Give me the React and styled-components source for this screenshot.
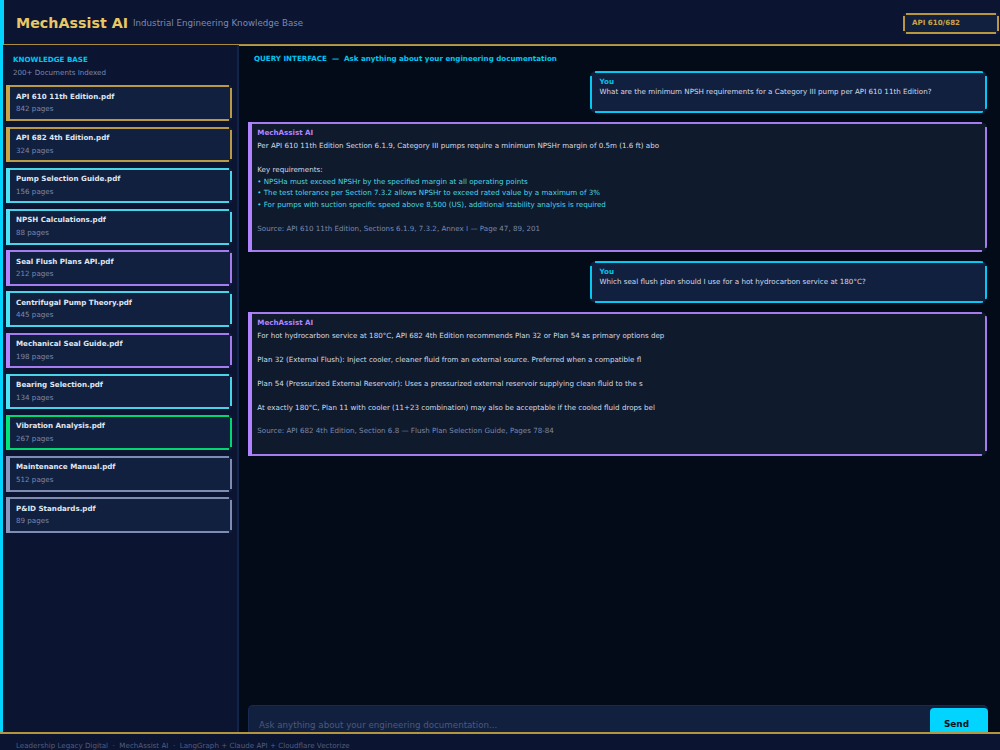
import React from "react";
import styled, { createGlobalStyle } from "styled-components";

const GlobalStyle = createGlobalStyle`
  * {
    box-sizing: border-box;
  }

  body {
    margin: 0;
    background: #040b18;
    font-family: "DejaVu Sans", sans-serif;
    overflow: hidden;
  }
`;

const colors = {
  cyan: "#00d4ff",
  aqua: "#4de3f7",
  gold: "#c9a445",
  purple: "#b184ff",
  green: "#00e676",
  slate: "#8896bd",
};

const documents = [
  { name: "API 610 11th Edition.pdf", pages: 842, color: colors.gold },
  { name: "API 682 4th Edition.pdf", pages: 324, color: colors.gold },
  { name: "Pump Selection Guide.pdf", pages: 156, color: colors.aqua },
  { name: "NPSH Calculations.pdf", pages: 88, color: colors.aqua },
  { name: "Seal Flush Plans API.pdf", pages: 212, color: colors.purple },
  { name: "Centrifugal Pump Theory.pdf", pages: 445, color: colors.aqua },
  { name: "Mechanical Seal Guide.pdf", pages: 198, color: colors.purple },
  { name: "Bearing Selection.pdf", pages: 134, color: colors.aqua },
  { name: "Vibration Analysis.pdf", pages: 267, color: colors.green },
  { name: "Maintenance Manual.pdf", pages: 512, color: colors.slate },
  { name: "P&ID Standards.pdf", pages: 89, color: colors.slate },
];

const messages = [
  {
    from: "user",
    text: "What are the minimum NPSH requirements for a Category III pump per API 610 11th Edition?",
  },
  {
    from: "ai",
    height: 130.4,
    lines: [
      { text: "Per API 610 11th Edition Section 6.1.9, Category III pumps require a minimum NPSHr margin of 0.5m (1.6 ft) abo" },
      { text: "" },
      { text: "Key requirements:" },
      { text: "• NPSHa must exceed NPSHr by the specified margin at all operating points", kind: "bullet" },
      { text: "• The test tolerance per Section 7.3.2 allows NPSHr to exceed rated value by a maximum of 3%", kind: "bullet" },
      { text: "• For pumps with suction specific speed above 8,500 (US), additional stability analysis is required", kind: "bullet" },
      { text: "" },
      { text: "Source: API 610 11th Edition, Sections 6.1.9, 7.3.2, Annex I — Page 47, 89, 201", kind: "source" },
    ],
  },
  {
    from: "user",
    text: "Which seal flush plan should I use for a hot hydrocarbon service at 180°C?",
  },
  {
    from: "ai",
    height: 143.2,
    lines: [
      { text: "For hot hydrocarbon service at 180°C, API 682 4th Edition recommends Plan 32 or Plan 54 as primary options dep" },
      { text: "" },
      { text: "Plan 32 (External Flush): Inject cooler, cleaner fluid from an external source. Preferred when a compatible fl" },
      { text: "" },
      { text: "Plan 54 (Pressurized External Reservoir): Uses a pressurized external reservoir supplying clean fluid to the s" },
      { text: "" },
      { text: "At exactly 180°C, Plan 11 with cooler (11+23 combination) may also be acceptable if the cooled fluid drops bel" },
      { text: "" },
      { text: "Source: API 682 4th Edition, Section 6.8 — Flush Plan Selection Guide, Pages 78-84", kind: "source" },
    ],
  },
];

const lineColors = {
  bullet: "#48d6e9",
  source: "#7a88ad",
};

const Page = styled.div`
  height: 750px;
  display: flex;
  flex-direction: column;
  overflow: hidden;
  white-space: pre;
`;

const Header = styled.header`
  flex: none;
  height: 46px;
  display: flex;
  align-items: center;
  padding: 0 1px 0 12px;
  border-left: 4px solid ${colors.cyan};
  background: linear-gradient(#a0853c, #c9a445) 0 100% / 100% 2px no-repeat #0b1430;
`;

const Title = styled.h1`
  margin: 0;
  font-size: 14.27px;
  line-height: 20px;
  color: #e8c766;
`;

const Subtitle = styled.span`
  margin-left: 5px;
  font-size: 8.7px;
  line-height: 20px;
  color: #7c8ab0;
`;

/* outline whose four strokes stop short of the rounded corners */
const Badge = styled.div`
  --line: linear-gradient(#b9973f, #b9973f);
  width: 96px;
  height: 21px;
  margin-left: auto;
  padding-left: 9px;
  border-radius: 3px;
  font-size: 7.1px;
  font-weight: bold;
  line-height: 20px;
  color: ${colors.gold};
  background:
    var(--line) 50% 0 / calc(100% - 6px) 2px no-repeat,
    var(--line) 50% 100% / calc(100% - 6px) 2px no-repeat,
    var(--line) 0 50% / 2px calc(100% - 6px) no-repeat,
    var(--line) 100% 50% / 2px calc(100% - 6px) no-repeat,
    #12203f;
`;

const Body = styled.div`
  flex: 1;
  min-height: 0;
  display: flex;
`;

const Sidebar = styled.aside`
  width: 239px;
  margin-top: -1px;
  padding: 8px 5px 0 3px;
  border-left: 3px solid ${colors.cyan};
  border-right: 2px solid #11244a;
  background: #0b1430;
`;

const SidebarTitle = styled.h2`
  margin: 0 0 0 7px;
  font-size: 7.13px;
  line-height: 14px;
  color: #00c6f0;
`;

const SidebarNote = styled.p`
  margin: 0 0 0 7px;
  font-size: 7.13px;
  line-height: 12px;
  color: #7a88ad;
`;

const DocumentList = styled.ul`
  margin: 6.4px 0 0;
  padding: 0;
  list-style: none;
  display: grid;
  grid-auto-rows: 35.6px;
  gap: 5.6px;
`;

const DocumentCard = styled.li`
  --edge: color-mix(in srgb, ${(p) => p.$color} 92%, #12203f);
  --line: linear-gradient(var(--edge), var(--edge));
  padding: 5.4px 0 0 10px;
  border-radius: 0 3px 3px 0;
  background:
    linear-gradient(${(p) => p.$color}, ${(p) => p.$color}) 0 0 / 4px 100% no-repeat,
    var(--line) 0 0 / calc(100% - 3px) 2px no-repeat,
    var(--line) 0 100% / calc(100% - 3px) 2px no-repeat,
    var(--line) 100% 50% / 2px calc(100% - 6px) no-repeat,
    #12203f;
`;

const DocumentName = styled.div`
  font-size: 7.13px;
  font-weight: bold;
  line-height: 12px;
  margin-bottom: 0.6px;
  color: #dfe6f2;
`;

const DocumentPages = styled.div`
  font-size: 7.13px;
  line-height: 12.4px;
  color: #7a88ad;
`;

const Main = styled.main`
  flex: 1;
  min-width: 0;
  display: flex;
  flex-direction: column;
  padding: 6px 12px 0 9px;
`;

const MainTitle = styled.h2`
  margin: 0 0 5px 6px;
  font-size: 7.13px;
  line-height: 14px;
  color: #00c6f0;
`;

const Thread = styled.div`
  flex: 1;
  display: flex;
  flex-direction: column;
  gap: 9px;
  padding-right: 1px;
`;

const UserBubble = styled.div`
  --line: linear-gradient(#02caf5, #02caf5);
  flex: none;
  align-self: flex-end;
  width: 397px;
  height: 42px;
  padding: 6px 0 0 9.5px;
  border-radius: 6px;
  background:
    var(--line) 50% 0 / calc(100% - 9px) 2px no-repeat,
    var(--line) 50% 100% / calc(100% - 9px) 2px no-repeat,
    var(--line) 0 50% / 2px calc(100% - 9px) no-repeat,
    var(--line) 100% 50% / 2px calc(100% - 9px) no-repeat,
    #12203f;
`;

const AiBubble = styled.div`
  --line: linear-gradient(#a57bee, #a57bee);
  flex: none;
  height: ${(p) => p.$height}px;
  padding: 5px 0 0 9.3px;
  border-radius: 0 6px 6px 0;
  background:
    linear-gradient(${colors.purple}, ${colors.purple}) 0 0 / 4px 100% no-repeat,
    var(--line) 0 0 / calc(100% - 5px) 2px no-repeat,
    var(--line) 0 100% / calc(100% - 5px) 2px no-repeat,
    var(--line) 100% 50% / 2px calc(100% - 9px) no-repeat,
    #0f1a2c;
`;

const Author = styled.div`
  font-size: 7.13px;
  font-weight: bold;
  line-height: ${(p) => (p.$ai ? 12 : 10)}px;
  margin-bottom: ${(p) => (p.$ai ? 1 : -1)}px;
  color: ${(p) => (p.$ai ? colors.purple : "#00c6f0")};
`;

const Line = styled.div`
  height: 11.87px;
  font-size: 7.13px;
  line-height: 11.87px;
  color: ${(p) => lineColors[p.$kind] || "#d3dae8"};
`;

const Composer = styled.div`
  flex: none;
  height: 27px;
  display: flex;
  justify-content: space-between;
  padding: 3px 0 0 10px;
  border: 1px solid #172a52;
  border-width: 1px 0 0 1px;
  border-radius: 5px 5px 0 0;
  background: #12203f;
`;

const Placeholder = styled.span`
  font-size: 8.7px;
  line-height: 32px;
  color: #4a597d;
`;

const SendButton = styled.button`
  width: 58px;
  height: 32px;
  margin-top: -1px;
  padding: 0 5px 0 0;
  border: 0;
  border-radius: 4px;
  font: bold 8.9px "DejaVu Sans", sans-serif;
  color: #04101f;
  background: ${colors.cyan};
`;

const Footer = styled.footer`
  position: relative;
  flex: none;
  height: 18px;
  padding: 6px 0 0 16px;
  border-top: 2px solid #b5943f;
  font-size: 7.13px;
  line-height: 12px;
  color: #4f5e82;
  background: #0b1430;
`;

const Message = ({ message }) => {
  if (message.from === "user") {
    return (
      <UserBubble>
        <Author>You</Author>
        <Line>{message.text}</Line>
      </UserBubble>
    );
  }

  return (
    <AiBubble $height={message.height}>
      <Author $ai>MechAssist AI</Author>
      {message.lines.map((line, i) => (
        <Line key={i} $kind={line.kind}>
          {line.text}
        </Line>
      ))}
    </AiBubble>
  );
};

const App = () => {
  return (
    <>
      <GlobalStyle />
      <Page>
        <Header>
          <Title>MechAssist AI</Title>
          <Subtitle>Industrial Engineering Knowledge Base</Subtitle>
          <Badge>API 610/682</Badge>
        </Header>

        <Body>
          <Sidebar>
            <SidebarTitle>KNOWLEDGE BASE</SidebarTitle>
            <SidebarNote>200+ Documents Indexed</SidebarNote>
            <DocumentList>
              {documents.map((doc) => (
                <DocumentCard key={doc.name} $color={doc.color}>
                  <DocumentName>{doc.name}</DocumentName>
                  <DocumentPages>{doc.pages} pages</DocumentPages>
                </DocumentCard>
              ))}
            </DocumentList>
          </Sidebar>

          <Main>
            <MainTitle>
              {"QUERY INTERFACE  —  Ask anything about your engineering documentation"}
            </MainTitle>
            <Thread>
              {messages.map((message, i) => (
                <Message key={i} message={message} />
              ))}
            </Thread>
            <Composer>
              <Placeholder>Ask anything about your engineering documentation...</Placeholder>
              <SendButton>Send</SendButton>
            </Composer>
          </Main>
        </Body>

        <Footer>
          {"Leadership Legacy Digital  ·  MechAssist AI  ·  LangGraph + Claude API + Cloudflare Vectorize"}
        </Footer>
      </Page>
    </>
  );
};

export default App;
